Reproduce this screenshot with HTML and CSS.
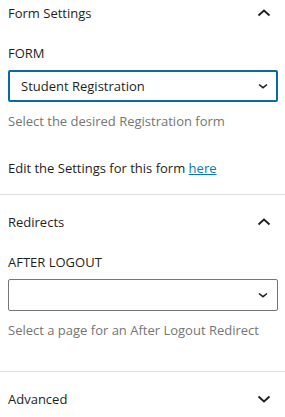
FILE: index.html
```html
<!DOCTYPE html>
<html>
<head>
    <title>Block Settings</title>
    <link rel="stylesheet" href="styles.css">
</head>
<body>
    <div class="panel">
        <div class="panel-header">
            <span>Form Settings</span>
            <svg class="toggle" width="24" height="24" viewBox="0 0 24 24"><path d="M6.5 14.5l5.5-5 5.5 5" fill="none" stroke="#1e1e1e" stroke-width="1.8"/></svg>
        </div>
        <div class="field">
            <label class="label">FORM</label>
            <div class="select focused">
                <span>Student Registration</span>
                <svg class="caret" width="12" height="12" viewBox="0 0 12 12"><path d="M2 4.5l4 3.2 4-3.2" fill="none" stroke="#1e1e1e" stroke-width="1.5"/></svg>
            </div>
            <p class="help">Select the desired Registration form</p>
        </div>
        <p class="note">Edit the Settings for this form <a href="#">here</a></p>
    </div>

    <div class="panel">
        <div class="panel-header">
            <span>Redirects</span>
            <svg class="toggle" width="24" height="24" viewBox="0 0 24 24"><path d="M6.5 14.5l5.5-5 5.5 5" fill="none" stroke="#1e1e1e" stroke-width="1.8"/></svg>
        </div>
        <div class="field last">
            <label class="label">AFTER LOGOUT</label>
            <div class="select">
                <span></span>
                <svg class="caret" width="12" height="12" viewBox="0 0 12 12"><path d="M2 4.5l4 3.2 4-3.2" fill="none" stroke="#1e1e1e" stroke-width="1.5"/></svg>
            </div>
            <p class="help">Select a page for an After Logout Redirect</p>
        </div>
    </div>

    <div class="panel">
        <div class="panel-header">
            <span>Advanced</span>
            <svg class="toggle" width="24" height="24" viewBox="0 0 24 24"><path d="M6.5 9.5l5.5 5 5.5-5" fill="none" stroke="#1e1e1e" stroke-width="1.8"/></svg>
        </div>
    </div>
</body>
</html>
```

FILE: styles.css
```css
body {
    font-family: "Open Sans", "Noto Sans", sans-serif;
    font-size: 13px;
    line-height: 20px;
    color: #1e1e1e;
    margin: 0;
    background: #fff;
}
.panel {
    border-top: 1px solid #e0e0e0;
    padding: 17px 7px 16px 8px;
}
.panel:first-child {
    border-top: none;
    padding-top: 3px;
}
.panel-header {
    display: flex;
    justify-content: space-between;
    align-items: center;
    height: 20px;
}
.toggle {
    margin-right: 2px;
}
.field {
    margin-top: 20px;
}
.label {
    display: block;
}
.select {
    display: flex;
    justify-content: space-between;
    align-items: center;
    height: 32px;
    box-sizing: border-box;
    margin-top: 7px;
    padding: 0 8px 0 12px;
    border: 1px solid #757575;
    border-radius: 2px;
}
.select.focused {
    border: 2px solid #0a6aa1;
    padding-left: 11px;
    padding-right: 7px;
}
.help {
    margin: 9px 0 0;
    color: #757575;
}
.field.last {
    padding-bottom: 15px;
}
.note {
    margin: 27px 0 0;
}
.note a {
    color: #007cba;
}
```
